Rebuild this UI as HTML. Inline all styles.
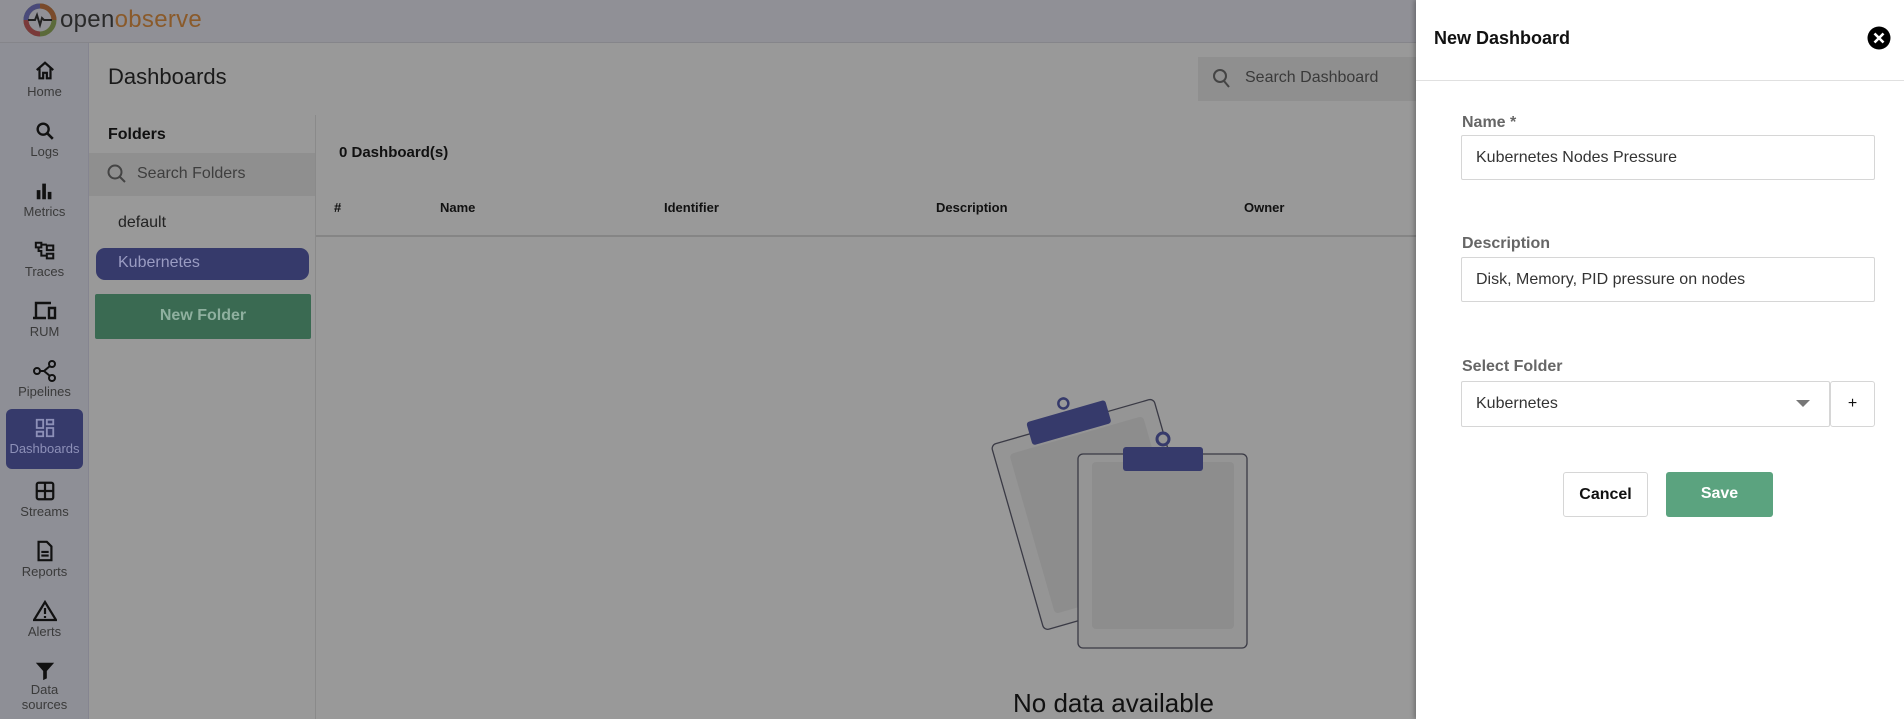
<!DOCTYPE html>
<html><head><meta charset="utf-8"><style>
*{box-sizing:border-box;margin:0;padding:0}
body{width:1904px;height:719px;overflow:hidden;font-family:"Liberation Sans",sans-serif;background:#999;position:relative}
.abs{position:absolute}
.hdr{left:0;top:0;width:1416px;height:43px;background:#909096;border-bottom:1px solid #85858a}
.side{left:0;top:43px;width:89px;height:676px;background:#8e8f96;border-right:1px solid #858590}
.nav{position:absolute;left:6px;width:77px;height:60px;text-align:center;font-size:13px;color:#3a3a3a}
.nav svg{display:block;margin:8px auto 2px}
.nav.act{background:#363a6b;border-radius:6px;color:#8d90b8}
.drawer{left:1416px;top:0;width:488px;height:719px;background:#fff;box-shadow:-2px 0 4px rgba(0,0,0,.25)}
.fl{position:absolute;left:46px;font-size:16px;color:#666;font-weight:bold}
.inp{position:absolute;left:45px;width:414px;height:45px;border:1px solid #d6d6d6;border-radius:2px;font-size:16px;color:#333;padding:13px 0 0 14px}
</style></head><body>
<div class="abs hdr"></div>
<svg class="abs" style="left:22px;top:2px" width="36" height="36" viewBox="0 0 36 36"><circle cx="18" cy="18" r="14" fill="none" stroke="#5b6a3a" stroke-width="5"/><path d="M18 4a14 14 0 0 1 14 14" stroke="#7a4a2a" stroke-width="5" fill="none"/><path d="M4 18a14 14 0 0 1 14-14" stroke="#4a4a7a" stroke-width="5" fill="none"/><path d="M18 32a14 14 0 0 1-14-14" stroke="#7a3a3a" stroke-width="5" fill="none"/><path d="M6 18h7l2-5 3 10 2-7 2 2h8" stroke="#222" stroke-width="2" fill="none"/></svg>
<div class="abs" style="left:60px;top:6px;font-size:24px;color:#2a2a2a;letter-spacing:0.3px">open<span style="color:#8a5a2a">observe</span></div>
<div class="abs side"></div>
<div class="nav" style="top:52px"><svg width="22" height="22" viewBox="0 0 24 24"><path d="M3 11l9-8 9 8M6 9v11h4v-6h4v6h4V9" fill="none" stroke="#111" stroke-width="2.4"/></svg>Home</div>
<div class="nav" style="top:112px"><svg width="22" height="22" viewBox="0 0 24 24"><circle cx="10" cy="10" r="6" fill="none" stroke="#111" stroke-width="2.6"/><path d="M14.5 14.5l6 6" stroke="#111" stroke-width="2.8"/></svg>Logs</div>
<div class="nav" style="top:172px"><svg width="22" height="22" viewBox="0 0 24 24"><path d="M3 11h4v10H3zM9 4h4v17H9zM15 13h4v8h-4z" fill="#111"/></svg>Metrics</div>
<div class="nav" style="top:232px"><svg width="22" height="22" viewBox="0 0 24 24"><path d="M2 3h6v5H2zM14 6h7v5h-7zM14 15h7v5h-7zM8 5h6M5 8v4h3v5h6" fill="none" stroke="#111" stroke-width="2.2"/></svg>Traces</div>
<div class="nav" style="top:292px"><svg width="26" height="22" viewBox="0 0 26 22"><path d="M4 17V3h15M1 18h13M17 8h6v10h-6z" fill="none" stroke="#111" stroke-width="2.4"/></svg>RUM</div>
<div class="nav" style="top:352px"><svg width="24" height="22" viewBox="0 0 24 22"><circle cx="4" cy="11" r="3" fill="none" stroke="#111" stroke-width="2"/><circle cx="19" cy="4" r="3" fill="none" stroke="#111" stroke-width="2"/><circle cx="19" cy="18" r="3" fill="none" stroke="#111" stroke-width="2"/><path d="M7 11h4l6-5M11 11l6 5" fill="none" stroke="#111" stroke-width="2"/></svg>Pipelines</div>
<div class="nav act" style="top:409px"><svg width="22" height="22" viewBox="0 0 24 24"><path d="M3 3h7v9H3zM14 3h7v5h-7zM14 12h7v9h-7zM3 16h7v5H3z" fill="none" stroke="#8d90b8" stroke-width="2"/></svg>Dashboards</div>
<div class="nav" style="top:472px"><svg width="22" height="22" viewBox="0 0 24 24"><rect x="3" y="3" width="18" height="18" rx="2" fill="none" stroke="#111" stroke-width="2.4"/><path d="M12 3v18M3 12h18" stroke="#111" stroke-width="2.4"/></svg>Streams</div>
<div class="nav" style="top:532px"><svg width="22" height="22" viewBox="0 0 24 24"><path d="M5 2h9l5 5v15H5zM8 13h8M8 17h8" fill="none" stroke="#111" stroke-width="2.4"/></svg>Reports</div>
<div class="nav" style="top:592px"><svg width="24" height="22" viewBox="0 0 24 22"><path d="M12 2L1 20h22z" fill="none" stroke="#111" stroke-width="2.2"/><path d="M12 8v6M12 16v2" stroke="#111" stroke-width="2.2"/></svg>Alerts</div>
<div class="nav" style="top:652px;line-height:15px"><svg width="22" height="22" viewBox="0 0 24 24" style="margin-bottom:0"><path d="M2 3h20l-8 9v8l-4 2V12z" fill="#111"/></svg>Data<br>sources</div>

<div class="abs" style="left:108px;top:64px;font-size:22px;color:#1a1a1a">Dashboards</div>
<div class="abs" style="left:1198px;top:57px;width:218px;height:44px;background:#8f8f8f"></div>
<svg class="abs" style="left:1212px;top:68px" width="20" height="22" viewBox="0 0 20 22"><circle cx="8" cy="8" r="6" fill="none" stroke="#444" stroke-width="2"/><path d="M12 13l5 6" stroke="#444" stroke-width="2"/></svg>
<div class="abs" style="left:1245px;top:69px;font-size:16px;color:#3a3a3a">Search Dashboard</div>

<div class="abs" style="left:108px;top:126px;font-size:16px;font-weight:bold;color:#111">Folders</div>
<div class="abs" style="left:89px;top:153px;width:226px;height:43px;background:#8f8f8f"></div>
<svg class="abs" style="left:106px;top:163px" width="22" height="22" viewBox="0 0 22 22"><circle cx="9" cy="9" r="6.5" fill="none" stroke="#444" stroke-width="2"/><path d="M14 14l5 5" stroke="#444" stroke-width="2"/></svg>
<div class="abs" style="left:137px;top:165px;font-size:16px;color:#3e3e3e">Search Folders</div>
<div class="abs" style="left:118px;top:214px;font-size:16px;color:#222">default</div>
<div class="abs" style="left:96px;top:248px;width:213px;height:32px;background:#363a6b;border-radius:9px;color:#9a9cc2;font-size:16px;padding:6px 0 0 22px">Kubernetes</div>
<div class="abs" style="left:95px;top:294px;width:216px;height:45px;background:#3a6a52;border-radius:2px;color:#8fb09f;font-size:16px;font-weight:bold;text-align:center;padding-top:13px">New Folder</div>
<div class="abs" style="left:315px;top:115px;width:1px;height:604px;background:#8a8a8a"></div>

<div class="abs" style="left:339px;top:144px;font-size:15px;font-weight:bold;color:#111">0 Dashboard(s)</div>
<div class="abs" style="top:200px;left:0;font-size:13px;font-weight:bold;color:#111">
<span class="abs" style="left:334px">#</span><span class="abs" style="left:440px">Name</span><span class="abs" style="left:664px">Identifier</span><span class="abs" style="left:936px">Description</span><span class="abs" style="left:1244px">Owner</span></div>
<div class="abs" style="left:316px;top:235px;width:1100px;height:2px;background:#858585"></div>

<svg class="abs" style="left:960px;top:380px" width="300" height="300" viewBox="0 0 300 300">
<g transform="translate(31 65) rotate(-16)"><rect x="0" y="0" width="169" height="193" rx="5" fill="#959595" stroke="#3a3a45" stroke-width="1.3"/><rect x="15" y="14" width="139" height="166" rx="4" fill="#8d8d8d"/><rect x="40" y="-12" width="82" height="24" rx="3" fill="#363a6b"/><circle cx="81" cy="-20" r="5" fill="none" stroke="#363a6b" stroke-width="2.5"/></g>
<rect x="118" y="74" width="169" height="194" rx="5" fill="#959595" stroke="#3a3a45" stroke-width="1.3"/>
<rect x="132" y="82" width="142" height="167" rx="4" fill="#8d8d8d"/>
<rect x="163" y="67" width="80" height="24" rx="3" fill="#363a6b"/>
<circle cx="203" cy="59" r="6" fill="#959595" stroke="#363a6b" stroke-width="3"/>
</svg>
<div class="abs" style="left:1013px;top:688px;font-size:26px;color:#111">No data available</div>

<div class="abs drawer">
<div class="abs" style="left:18px;top:28px;font-size:18px;font-weight:bold;color:#111">New Dashboard</div>
<svg class="abs" style="left:451px;top:26px" width="24" height="24" viewBox="0 0 24 24"><circle cx="12" cy="12" r="11.5" fill="#000"/><path d="M7.5 7.5l9 9M16.5 7.5l-9 9" stroke="#fff" stroke-width="2.6"/></svg>
<div class="abs" style="left:0;top:80px;width:488px;height:1px;background:#e0e0e0"></div>
<div class="fl" style="top:114px">Name *</div>
<div class="inp" style="top:135px">Kubernetes Nodes Pressure</div>
<div class="fl" style="top:235px">Description</div>
<div class="inp" style="top:257px">Disk, Memory, PID pressure on nodes</div>
<div class="fl" style="top:358px">Select Folder</div>
<div class="inp" style="top:381px;width:369px;height:46px">Kubernetes</div>
<svg class="abs" style="left:380px;top:400px" width="14" height="8" viewBox="0 0 14 8"><path d="M0 0h14L7 7z" fill="#777"/></svg>
<div class="abs" style="left:414px;top:381px;width:45px;height:46px;border:1px solid #d6d6d6;border-radius:3px;text-align:center;font-size:16px;padding-top:13px;color:#111">+</div>
<div class="abs" style="left:147px;top:472px;width:85px;height:45px;border:1px solid #d6d6d6;border-radius:3px;text-align:center;font-size:16px;font-weight:bold;padding-top:13px;color:#111">Cancel</div>
<div class="abs" style="left:250px;top:472px;width:107px;height:45px;background:#5ba37f;border-radius:3px;text-align:center;font-size:16px;font-weight:bold;padding-top:13px;color:#fff">Save</div>
</div>
</body></html>
